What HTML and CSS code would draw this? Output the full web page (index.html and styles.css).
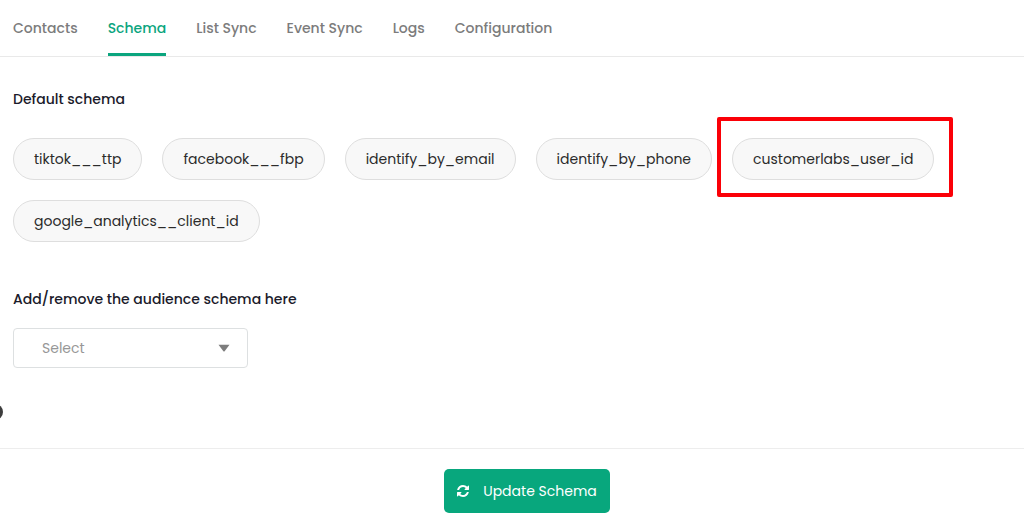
FILE: index.html
```html
<!DOCTYPE html>
<html lang="en">
<head>
<meta charset="utf-8">
<meta name="viewport" content="width=device-width, initial-scale=1">
<title>Schema</title>
<link rel="stylesheet" href="styles.css">
</head>
<body>
<nav class="tabs" aria-label="Audience sections">
  <a class="tab" href="#contacts">Contacts</a>
  <a class="tab tab-active" href="#schema" aria-current="page">Schema</a>
  <a class="tab" href="#list-sync">List Sync</a>
  <a class="tab" href="#event-sync">Event Sync</a>
  <a class="tab" href="#logs">Logs</a>
  <a class="tab" href="#configuration">Configuration</a>
</nav>
<main class="content">
  <h2 class="heading">Default schema</h2>
  <ul class="chips">
    <li class="chip">tiktok___ttp</li>
    <li class="chip">facebook___fbp</li>
    <li class="chip">identify_by_email</li>
    <li class="chip">identify_by_phone</li>
    <li class="chip chip-marked">customerlabs_user_id</li>
    <li class="chip">google_analytics__client_id</li>
  </ul>
  <label class="heading" for="audience-schema">Add/remove the audience schema here</label>
  <div class="picker">
    <select class="select" id="audience-schema"><option>Select</option></select>
    <svg class="caret" viewBox="0 0 12 8" aria-hidden="true"><path d="M0.5 0.8H11.5L6.6 7.2Q6 7.8 5.4 7.2Z" fill="#7d7d7d"/></svg>
  </div>
  <span class="edge-dot" aria-hidden="true"></span>
</main>
<footer class="footer">
  <button class="update" type="button">
    <svg class="refresh" viewBox="0 0 1536 1536" aria-hidden="true"><path fill="currentColor" d="M1511 928q0 5-1 7-64 268-268 434.500T764 1536q-146 0-282.500-55T238 1324l-129 129q-19 19-45 19t-45-19-19-45V960q0-26 19-45t45-19h448q26 0 45 19t19 45-19 45l-137 137q71 66 161 102t187 36q134 0 250-65t186-179q11-17 53-117 8-23 30-23h192q13 0 22.500 9.500t9.500 22.500zm25-800v448q0 26-19 45t-45 19h-448q-26 0-45-19t-19-45 19-45l138-138Q969 256 768 256q-134 0-250 65T332 500q-11 17-53 117-8 23-30 23H50q-13 0-22.500-9.500T18 608v-7q65-268 270-434.500T768 0q146 0 284 55.500T1297 212l130-129q19-19 45-19t45 19 19 45z"/></svg>
    Update Schema
  </button>
</footer>
</body>
</html>
```
FILE: styles.css
```css
* {
  box-sizing: border-box;
}

body {
  margin: 0;
  background: #fff;
  color: #2b2b2b;
  font-family: Poppins, Inter, "Liberation Sans", sans-serif;
  font-size: 14px;
  line-height: 20px;
}

.tabs {
  display: flex;
  gap: 30px;
  padding: 0 13px;
  border-bottom: 1px solid #e9e9e9;
}

.tab {
  padding: 18px 0 15px;
  border-bottom: 3px solid transparent;
  color: #7c7c7c;
  font-weight: 500;
  text-decoration: none;
}

.tab-active {
  border-color: #0ba57e;
  color: #0ba57e;
}

.content {
  padding: 32px 13px 0;
}

.heading {
  display: block;
  margin: 0;
  color: #1b1b2b;
  font-size: 14px;
  font-weight: 500;
}

.chips {
  display: flex;
  flex-wrap: wrap;
  gap: 20px;
  margin: 29px 0 47px;
  padding: 0;
  list-style: none;
}

.chip {
  padding: 10px 20px;
  border: 1px solid #dedede;
  border-radius: 21px;
  background: #f8f8f8;
}

.chip-marked {
  position: relative;
}

.chip-marked::after {
  content: "";
  position: absolute;
  inset: -22px -20px -18px -16px;
  border: 4px solid #fb0007;
  border-radius: 2px;
}

.picker {
  display: grid;
  width: 235px;
  margin-top: 19px;
}

.select {
  grid-area: 1 / 1;
  height: 40px;
  padding: 0 28px;
  border: 1px solid #dde0e1;
  border-radius: 4px;
  appearance: none;
  background: #fff;
  color: #979797;
  font: inherit;
}

.caret {
  grid-area: 1 / 1;
  place-self: center end;
  width: 12px;
  height: 8px;
  margin-right: 18px;
  pointer-events: none;
}

.edge-dot {
  display: block;
  width: 16px;
  height: 16px;
  margin: 36px 0 28px -26px;
  border-radius: 50%;
  background: #3d3d3d;
}

.footer {
  display: flex;
  justify-content: center;
  padding: 20px;
  border-top: 1px solid #ededed;
}

.update {
  display: flex;
  align-items: center;
  gap: 14px;
  margin-left: 30px;
  padding: 12px 13px;
  border: 0;
  border-radius: 5px;
  background: #08a77d;
  color: #fff;
  font: inherit;
}

.refresh {
  width: 12px;
  height: 12px;
}
```
